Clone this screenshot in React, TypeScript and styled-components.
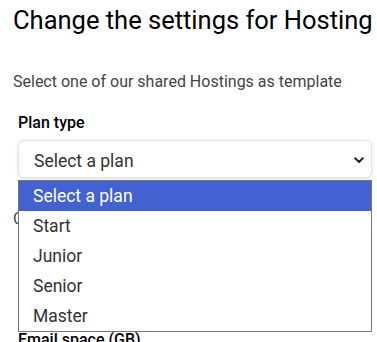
import React from "react";
import styled, { createGlobalStyle } from "styled-components";

const plans = ["Select a plan", "Start", "Junior", "Senior", "Master"];

const GlobalStyle = createGlobalStyle`
  body {
    margin: 0;
    background: #fff;
    font-family: Roboto, "Liberation Sans", sans-serif;
    color: #333;
  }
`;

const App = () => {
  return (
    <Page>
      <GlobalStyle />
      <Title>Change the settings for Hosting</Title>
      <Intro>Select one of our shared Hostings as template</Intro>
      <Field>
        <Label>Plan type</Label>
        <SelectWrap>
          <SelectBox>
            <span>Select a plan</span>
            <svg width="10" height="7" viewBox="0 0 10 7">
              <path
                d="M1.2 1.2 L5 5 L8.8 1.2"
                fill="none"
                stroke="#222"
                strokeWidth="2"
                strokeLinecap="round"
                strokeLinejoin="round"
              />
            </svg>
          </SelectBox>
          <Options>
            {plans.map((p, i) => (
              <Option key={p} selected={i === 0}>
                {p}
              </Option>
            ))}
          </Options>
        </SelectWrap>
      </Field>
      <Note>Customize the settings of your hosting below</Note>
      <Spacer />
      <Field>
        <Label>Email space (GB)</Label>
      </Field>
    </Page>
  );
};

const Page = styled.div`
  padding: 6px 5px 0 13px;
  display: flex;
  flex-direction: column;
`;

const Title = styled.h1`
  margin: 0;
  font-size: 25.5px;
  font-weight: 400;
  line-height: 28px;
  color: #000;
  white-space: nowrap;
`;

const Intro = styled.p`
  margin: 37px 0 0;
  font-size: 16px;
  line-height: 22px;
  color: #444;
`;

const Field = styled.div`
  padding: 0 0 0 5px;
  display: flex;
  flex-direction: column;
  gap: 6px;
  margin-top: 19px;
`;

const Label = styled.div`
  font-size: 16px;
  font-weight: 500;
  line-height: 22px;
  color: #000;
`;

const SelectWrap = styled.div`
  position: relative;
`;

const SelectBox = styled.div`
  height: 38px;
  box-sizing: border-box;
  border: 1px solid #e2e2e2;
  border-radius: 6px;
  box-shadow: 0 1px 4px rgba(0, 0, 0, 0.12);
  background: #fff;
  display: flex;
  align-items: center;
  justify-content: space-between;
  padding: 3px 7px 0 15px;
  font-size: 17.5px;
  color: #333;
`;

const Options = styled.ul`
  position: absolute;
  top: 40px;
  left: 0;
  right: 0;
  margin: 0;
  padding: 0;
  list-style: none;
  border: 1px solid #767676;
  background: #fff;
  z-index: 2;
`;

const Option = styled.li<{ selected?: boolean }>`
  height: 30px;
  line-height: 30px;
  padding-left: 14px;
  font-size: 17.5px;
  color: ${(p) => (p.selected ? "#fff" : "#333")};
  background: ${(p) => (p.selected ? "#4361d1" : "transparent")};
`;

const Note = styled.p`
  margin: 30px 0 0;
  font-size: 16px;
  line-height: 22px;
  color: #444;
`;

const Spacer = styled.div`
  height: 80px;
`;

export default App;
